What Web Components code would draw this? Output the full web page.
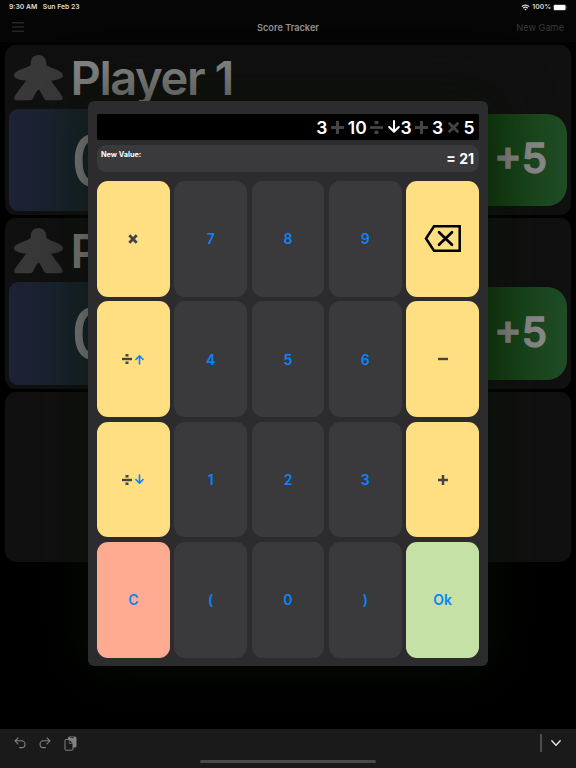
<!DOCTYPE html>
<html lang="en">
<head>
<meta charset="utf-8">
<title>Score Tracker</title>
<style>
  body {
    margin: 0;
    background: #000;
    font-family: Inter, "Liberation Sans", sans-serif;
  }
</style>
</head>
<body>
<score-app></score-app>

<script>
class StatusBar extends HTMLElement {
  constructor () {
    super()
    this.shadow = this.attachShadow({ mode: 'open' })
  }

  connectedCallback () {
    this.render()
  }

  render () {
    this.shadow.innerHTML =
      /* html */`
      <style>
        :host {
          display: flex;
          justify-content: space-between;
          align-items: center;
          height: 14px;
          padding: 0 8px 0 9px;
          color: #dedede;
          font-size: 6.8px;
          font-weight: 600;
          line-height: 14px
        }

        .left, .right {
          display: flex;
          align-items: center
        }

        .left {
          gap: 5.5px
        }

        .right {
          gap: 2px
        }

        svg {
          display: block
        }
      </style>

      <div class="left"><span>9:30 AM</span><span>Sun Feb 23</span></div>
      <div class="right">
        <svg width="9" height="7" viewBox="0 0 9 7" fill="none" stroke="#dedede" stroke-width="1.3">
          <path d="M.8 2.6a5.2 5.2 0 0 1 7.4 0M2.2 4.2a3.3 3.3 0 0 1 4.6 0"/>
          <path d="M3.4 5.2a1.6 1.6 0 0 1 2.2 0L4.5 6.4z" fill="#dedede" stroke="none"/>
        </svg>
        <span>100%</span>
        <svg width="15" height="7" viewBox="0 0 15 7">
          <rect x=".3" y=".4" width="12.8" height="6.2" rx="1.7" fill="none" stroke="#777" stroke-width=".5"/>
          <rect x=".9" y="1" width="11.6" height="5" rx="1.2" fill="#fff"/>
          <path d="M13.8 2.5q1 1 0 2z" fill="#777"/>
        </svg>
      </div>
      `
  }
}

class NavBar extends HTMLElement {
  constructor () {
    super()
    this.shadow = this.attachShadow({ mode: 'open' })
  }

  connectedCallback () {
    this.render()
  }

  render () {
    this.shadow.innerHTML =
      /* html */`
      <style>
        :host {
          display: grid;
          grid-template-columns: 1fr auto 1fr;
          align-items: center;
          height: 28px;
          padding: 0 12px 1px;
          box-sizing: border-box;
          border-bottom: 1px solid #080808;
          font-size: 9.2px
        }

        svg {
          display: block
        }

        .title {
          color: #929292;
          font-weight: 600
        }

        .action {
          justify-self: end;
          color: #3a3a3a
        }
      </style>

      <svg width="12" height="10" viewBox="0 0 12 10" stroke="#363636" stroke-width="1">
        <path d="M0 .8h12M0 5h12M0 9.2h12"/>
      </svg>
      <span class="title"><slot></slot></span>
      <span class="action">New Game</span>
      `
  }
}

class PlayerCard extends HTMLElement {
  constructor () {
    super()
    this.shadow = this.attachShadow({ mode: 'open' })
  }

  connectedCallback () {
    this.render()
  }

  render () {
    this.shadow.innerHTML =
      /* html */`
      <style>
        :host {
          display: flex;
          flex-direction: column;
          height: 170.3px;
          padding: 0 4px;
          box-sizing: border-box;
          border-radius: 11px;
          background: #101010;
          overflow: hidden
        }

        .head {
          display: flex;
          align-items: center;
          height: 64px;
          padding-left: 4.5px;
          gap: 8px
        }

        .head svg {
          display: block;
          margin-top: 2px
        }

        .name {
          margin-top: 2px;
          color: #858585;
          font-size: 47px;
          font-weight: 600;
          line-height: 60px;
          letter-spacing: -1.4px;
          white-space: nowrap
        }

        .scores {
          display: flex;
          align-items: center;
          gap: 6px;
          height: 102.5px
        }

        .score {
          display: flex;
          align-items: center;
          width: 386px;
          height: 102.5px;
          box-sizing: border-box;
          padding-left: 62px;
          border-radius: 9px;
          background: linear-gradient(90deg, #1d2234, #17242b 80px);
          color: #858585;
          font-size: 70px;
          font-weight: 500
        }

        .step {
          display: flex;
          flex: 1;
          align-items: center;
          justify-content: flex-end;
          height: 92.5px;
          box-sizing: border-box;
          padding: 0 20px 4px 0;
          border-radius: 20px;
          background: linear-gradient(90deg, #123f10 50%, #204c26)
        }

        .step span {
          color: #888;
          font-size: 41px;
          font-weight: 500;
          -webkit-text-stroke: 1.5px #888;
          paint-order: stroke;
          stroke-linejoin: round
        }
      </style>

      <div class="head">
        <svg width="49" height="46" viewBox="0 0 49 46" fill="#393939">
          <path d="M24.500 0C19 0 16.500 4 16.600 10C14 13 0 15 0 20.500C0 24 8 25.500 12 25.500C8 32 .3 40 .3 43.200Q.3 45.200 2.200 45.200H16.500Q18 45.200 19 43.500C21 39.500 23 35.500 24.500 34.500C26 35.500 28 39.500 30 43.500Q31 45.200 32.500 45.200H46.800Q48.700 45.200 48.700 43.200C48.700 40 41 32 37 25.500C41 25.500 49 24 49 20.500C49 15 35 13 32.400 10C32.500 4 30 0 24.500 0Z"/>
        </svg>
        <div class="name"><slot></slot></div>
      </div>
      <div class="scores">
        <div class="score">0</div>
        <div class="step"><span>+5</span></div>
      </div>
      `
  }
}

class CalcKey extends HTMLElement {
  constructor () {
    super()
    this.shadow = this.attachShadow({ mode: 'open' })
  }

  connectedCallback () {
    this.render()
  }

  render () {
    this.shadow.innerHTML =
      /* html */`
      <style>
        :host {
          display: flex;
          align-items: center;
          justify-content: center;
          gap: 3px;
          border-radius: 11px;
          background: #3a3a3c;
          color: #0a84ff;
          font-size: 14px;
          font-weight: 600
        }

        :host([kind="op"]) {
          background: #ffdf82
        }

        :host([kind="clear"]) {
          background: #ffab91
        }

        :host([kind="ok"]) {
          background: #c5e1a5
        }
      </style>
      <slot></slot>
      `
  }
}

// Operator and arrow glyphs, drawn in currentColor
class CalcGlyph extends HTMLElement {
  constructor () {
    super()
    this.shadow = this.attachShadow({ mode: 'open' })
  }

  connectedCallback () {
    this.render()
  }

  render () {
    const shapes = {
      plus: '<path d="M0 5h10M5 0v10"/>',
      minus: '<path d="M0 5h10"/>',
      times: '<path d="M1.300 1.300l7.400 7.400M8.700 1.300l-7.400 7.400"/>',
      divide: '<path d="M0 5h10"/><path d="M3.500 0h3v2.500h-3zM3.500 7.500h3V10h-3z" fill="currentColor" stroke="none"/>',
      up: '<path d="M5 10V1M1 5l4-4 4 4" stroke-linecap="round" stroke-linejoin="round"/>',
      down: '<path d="M5 0v9M1 5l4 4 4-4" stroke-linecap="round" stroke-linejoin="round"/>'
    }
    const size = this.getAttribute('size') || 10
    const weight = this.getAttribute('weight') || 2.4

    this.shadow.innerHTML =
      /* html */`
      <style>
        :host {
          display: block;
          color: #444446
        }

        :host([name="up"]), :host([name="down"]) {
          color: var(--arrow, #0a84ff)
        }

        svg {
          display: block;
          overflow: visible
        }
      </style>
      <svg width="${size}" height="${size}" viewBox="0 0 10 10" fill="none" stroke="currentColor" stroke-width="${weight}">
        ${shapes[this.getAttribute('name')]}
      </svg>
      `
  }
}

class CalcPad extends HTMLElement {
  constructor () {
    super()
    this.shadow = this.attachShadow({ mode: 'open' })
  }

  connectedCallback () {
    this.render()
  }

  render () {
    this.shadow.innerHTML =
      /* html */`
      <style>
        :host {
          display: flex;
          flex-direction: column;
          width: 400px;
          height: 565.3px;
          box-sizing: border-box;
          padding: 13px 9px 8.500px;
          border-radius: 6px;
          background: #2c2c2e;
          box-shadow: 0 0 50px 12px rgba(8, 18, 4, .5)
        }

        .display {
          --arrow: #fff;
          display: flex;
          align-items: center;
          justify-content: flex-end;
          height: 26px;
          margin-right: .5px;
          padding-right: 4px;
          box-sizing: border-box;
          border-radius: 2px;
          background: #000;
          color: #fff;
          font-size: 17.5px;
          font-weight: 600
        }

        .display calc-glyph {
          margin: 0 3.7px
        }

        .display calc-glyph[name="down"] {
          margin: 0 .5px 0 .8px
        }

        .result {
          display: flex;
          justify-content: space-between;
          height: 27px;
          margin: 5px 0 9px;
          padding: 0 5px 0 4px;
          box-sizing: border-box;
          border-radius: 9px;
          background: #3a3a3c;
          color: #fff
        }

        .label {
          padding-top: 4.5px;
          font-size: 7.3px;
          font-weight: 700;
          line-height: 9px
        }

        .value {
          font-size: 14px;
          font-weight: 700;
          line-height: 28px
        }

        .keys {
          flex: 1;
          display: grid;
          grid-template-columns: repeat(5, 1fr);
          grid-template-rows: repeat(4, 1fr);
          gap: 4.600px
        }
      </style>

      <div class="display">
        <span>3</span><calc-glyph name="plus" size="13" weight="2.4"></calc-glyph>
        <span>10</span><calc-glyph name="divide" size="13" weight="2.1"></calc-glyph>
        <calc-glyph name="down" size="12" weight="1.7"></calc-glyph><span>3</span>
        <calc-glyph name="plus" size="13" weight="2.4"></calc-glyph><span>3</span>
        <calc-glyph name="times" size="13" weight="2.2"></calc-glyph><span>5</span>
      </div>
      <div class="result">
        <span class="label">New Value:</span>
        <span class="value">= 21</span>
      </div>
      <div class="keys">
        <calc-key kind="op"><calc-glyph name="times" size="10" weight="2.8"></calc-glyph></calc-key>
        <calc-key>7</calc-key>
        <calc-key>8</calc-key>
        <calc-key>9</calc-key>
        <calc-key kind="op">
          <svg width="37" height="27" viewBox="0 0 37 27" fill="none" stroke="#000">
            <path d="M10 1.300H35.700V25.700H10L2 13.500z" stroke-width="2.500"/>
            <path d="M15 7.200l13 12.600M28 7.200l-13 12.600" stroke-width="2.700" stroke-linecap="round"/>
          </svg>
        </calc-key>

        <calc-key kind="op"><calc-glyph name="divide"></calc-glyph><calc-glyph name="up" size="9" weight="1.8"></calc-glyph></calc-key>
        <calc-key>4</calc-key>
        <calc-key>5</calc-key>
        <calc-key>6</calc-key>
        <calc-key kind="op"><calc-glyph name="minus"></calc-glyph></calc-key>

        <calc-key kind="op"><calc-glyph name="divide"></calc-glyph><calc-glyph name="down" size="9" weight="1.8"></calc-glyph></calc-key>
        <calc-key>1</calc-key>
        <calc-key>2</calc-key>
        <calc-key>3</calc-key>
        <calc-key kind="op"><calc-glyph name="plus" weight="2.5"></calc-glyph></calc-key>

        <calc-key kind="clear">C</calc-key>
        <calc-key>(</calc-key>
        <calc-key>0</calc-key>
        <calc-key>)</calc-key>
        <calc-key kind="ok">Ok</calc-key>
      </div>
      `
  }
}

class KeyboardBar extends HTMLElement {
  constructor () {
    super()
    this.shadow = this.attachShadow({ mode: 'open' })
  }

  connectedCallback () {
    this.render()
  }

  render () {
    this.shadow.innerHTML =
      /* html */`
      <style>
        :host {
          display: flex;
          flex-direction: column;
          justify-content: space-between;
          height: 39px;
          box-sizing: border-box;
          padding: 5px 14px;
          background: #1a1a1a
        }

        .tools, .edit, .dismiss {
          display: flex;
          align-items: center
        }

        .tools {
          justify-content: space-between;
          height: 18px
        }

        .edit {
          gap: 13px
        }

        .dismiss {
          gap: 8.5px
        }

        .line {
          width: 1.5px;
          height: 18px;
          background: #4c4c4c
        }

        .home {
          align-self: center;
          width: 176px;
          height: 3px;
          border-radius: 2px;
          background: #4b4b4b
        }

        svg {
          display: block
        }
      </style>

      <div class="tools">
        <div class="edit">
          <svg width="12" height="12" viewBox="0 0 12 12" fill="none" stroke="#828282" stroke-width="1.1" stroke-linecap="round" stroke-linejoin="round">
            <path d="M4 .8L1 3.800l3 3M1.200 3.800H7.600a3.400 3.400 0 0 1 0 6.800H5.500"/>
          </svg>
          <svg width="12" height="12" viewBox="0 0 12 12" fill="none" stroke="#828282" stroke-width="1.1" stroke-linecap="round" stroke-linejoin="round">
            <path d="M8 .8l3 3-3 3M10.800 3.800H4.400a3.400 3.400 0 0 0 0 6.800H6.500"/>
          </svg>
          <svg width="13" height="15" viewBox="0 0 13 15">
            <rect x="4" y=".5" width="8.500" height="11" rx="1.500" fill="#828282"/>
            <path d="M6.500 1.600h3.500" stroke="#1a1a1a" stroke-width=".8"/>
            <path d="M2 3.500H5.500L9 7.200V13.200Q9 14.200 8 14.200H2Q1 14.200 1 13.200V4.500Q1 3.500 2 3.500Z" fill="#1a1a1a" stroke="#828282" stroke-width="1"/>
            <path d="M5.300 3.800V7.400H8.800" fill="none" stroke="#828282" stroke-width=".8"/>
          </svg>
        </div>
        <div class="dismiss">
          <div class="line"></div>
          <svg width="12" height="8" viewBox="0 0 12 8" fill="none" stroke="#e6e6e6" stroke-width="1.400" stroke-linecap="round" stroke-linejoin="round">
            <path d="M1.800 1.800L6 6.200l4.200-4.400"/>
          </svg>
        </div>
      </div>
      <div class="home"></div>
      `
  }
}

class ScoreApp extends HTMLElement {
  constructor () {
    super()
    this.shadow = this.attachShadow({ mode: 'open' })
  }

  connectedCallback () {
    this.render()
  }

  render () {
    this.shadow.innerHTML =
      /* html */`
      <style>
        :host {
          position: relative;
          display: flex;
          flex-direction: column;
          width: 576px;
          height: 768px;
          overflow: hidden;
          background: #000
        }

        .top {
          background: #050505
        }

        .players {
          flex: 1;
          display: flex;
          flex-direction: column;
          gap: 3.300px;
          padding: 2.800px 5px 0
        }

        .empty {
          height: 170.500px;
          border-radius: 11px;
          background: #101010
        }

        /* The pad floats over the players */
        calc-pad {
          position: absolute;
          left: 88px;
          top: 101px
        }

        keyboard-bar {
          position: relative
        }
      </style>

      <div class="top">
        <status-bar></status-bar>
        <nav-bar>Score Tracker</nav-bar>
      </div>
      <div class="players">
        <player-card>Player 1</player-card>
        <player-card>Player 2</player-card>
        <div class="empty"></div>
      </div>
      <calc-pad></calc-pad>
      <keyboard-bar></keyboard-bar>
      `
  }
}

customElements.define('status-bar', StatusBar)
customElements.define('nav-bar', NavBar)
customElements.define('player-card', PlayerCard)
customElements.define('calc-key', CalcKey)
customElements.define('calc-glyph', CalcGlyph)
customElements.define('calc-pad', CalcPad)
customElements.define('keyboard-bar', KeyboardBar)
customElements.define('score-app', ScoreApp)
</script>
</body>
</html>
